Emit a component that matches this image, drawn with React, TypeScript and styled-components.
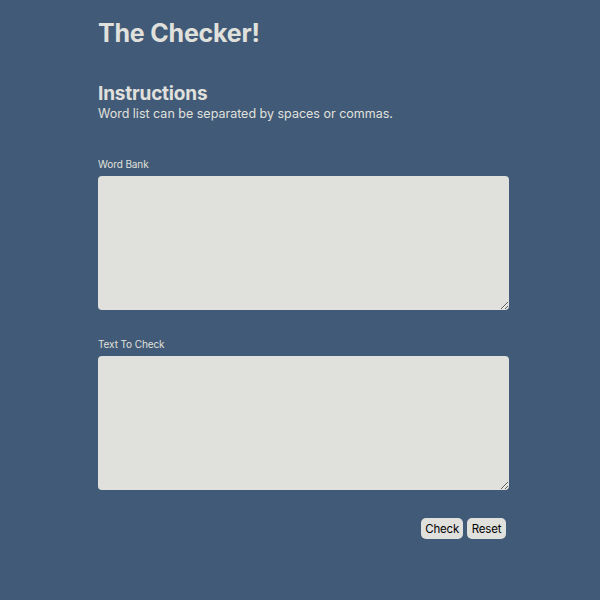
import React from "react";
import styled, { createGlobalStyle } from "styled-components";

const Global = createGlobalStyle`
  html, body { margin: 0; padding: 0; background: #415a77; }
  body { font-family: Inter, "Noto Sans", sans-serif; color: #e0e1dd; }
`;

const Page = styled.div`
  width: 600px;
  height: 600px;
  box-sizing: border-box;
  padding: 18px 91px 0 98px;
  display: flex;
  flex-direction: column;
`;

const Title = styled.h1`
  margin: 0;
  font-size: 25px;
  font-weight: 700;
  line-height: 30px;
  letter-spacing: -0.2px;
`;

const Section = styled.section`
  margin-top: 34px;
  display: flex;
  flex-direction: column;
`;

const Heading = styled.h2`
  margin: 0;
  font-size: 19px;
  font-weight: 700;
  line-height: 24px;
  letter-spacing: -0.2px;
`;

const Desc = styled.p`
  margin: 0;
  font-size: 12.5px;
  line-height: 16px;
`;

const Field = styled.label<{ $top: number }>`
  margin-top: ${(p) => p.$top}px;
  display: flex;
  flex-direction: column;
`;

const Label = styled.span`
  font-size: 10px;
  line-height: 12px;
  margin-bottom: 6px;
  letter-spacing: -0.1px;
`;

const Area = styled.textarea`
  height: 134px;
  box-sizing: border-box;
  border: none;
  border-radius: 4px;
  background: #e0e1dd;
  resize: vertical;
  font-family: inherit;
  padding: 6px;
  outline: none;
`;

const Actions = styled.div`
  margin-top: 28px;
  display: flex;
  justify-content: flex-end;
  gap: 4px;
  padding-right: 3px;
`;

const Button = styled.button`
  height: 21px;
  min-width: 39px;
  padding: 0 4px;
  border: none;
  border-radius: 5px;
  background: #e0e1dd;
  color: #000;
  font-family: Inter, "Noto Sans", sans-serif;
  font-size: 11.5px;
  letter-spacing: -0.2px;
`;

export default function App() {
  return (
    <>
      <Global />
      <Page>
        <Title>The Checker!</Title>
        <Section>
          <Heading>Instructions</Heading>
          <Desc>Word list can be separated by spaces or commas.</Desc>
        </Section>
        <Field $top={36}>
          <Label>Word Bank</Label>
          <Area />
        </Field>
        <Field $top={28}>
          <Label>Text To Check</Label>
          <Area />
        </Field>
        <Actions>
          <Button>Check</Button>
          <Button>Reset</Button>
        </Actions>
      </Page>
    </>
  );
}
